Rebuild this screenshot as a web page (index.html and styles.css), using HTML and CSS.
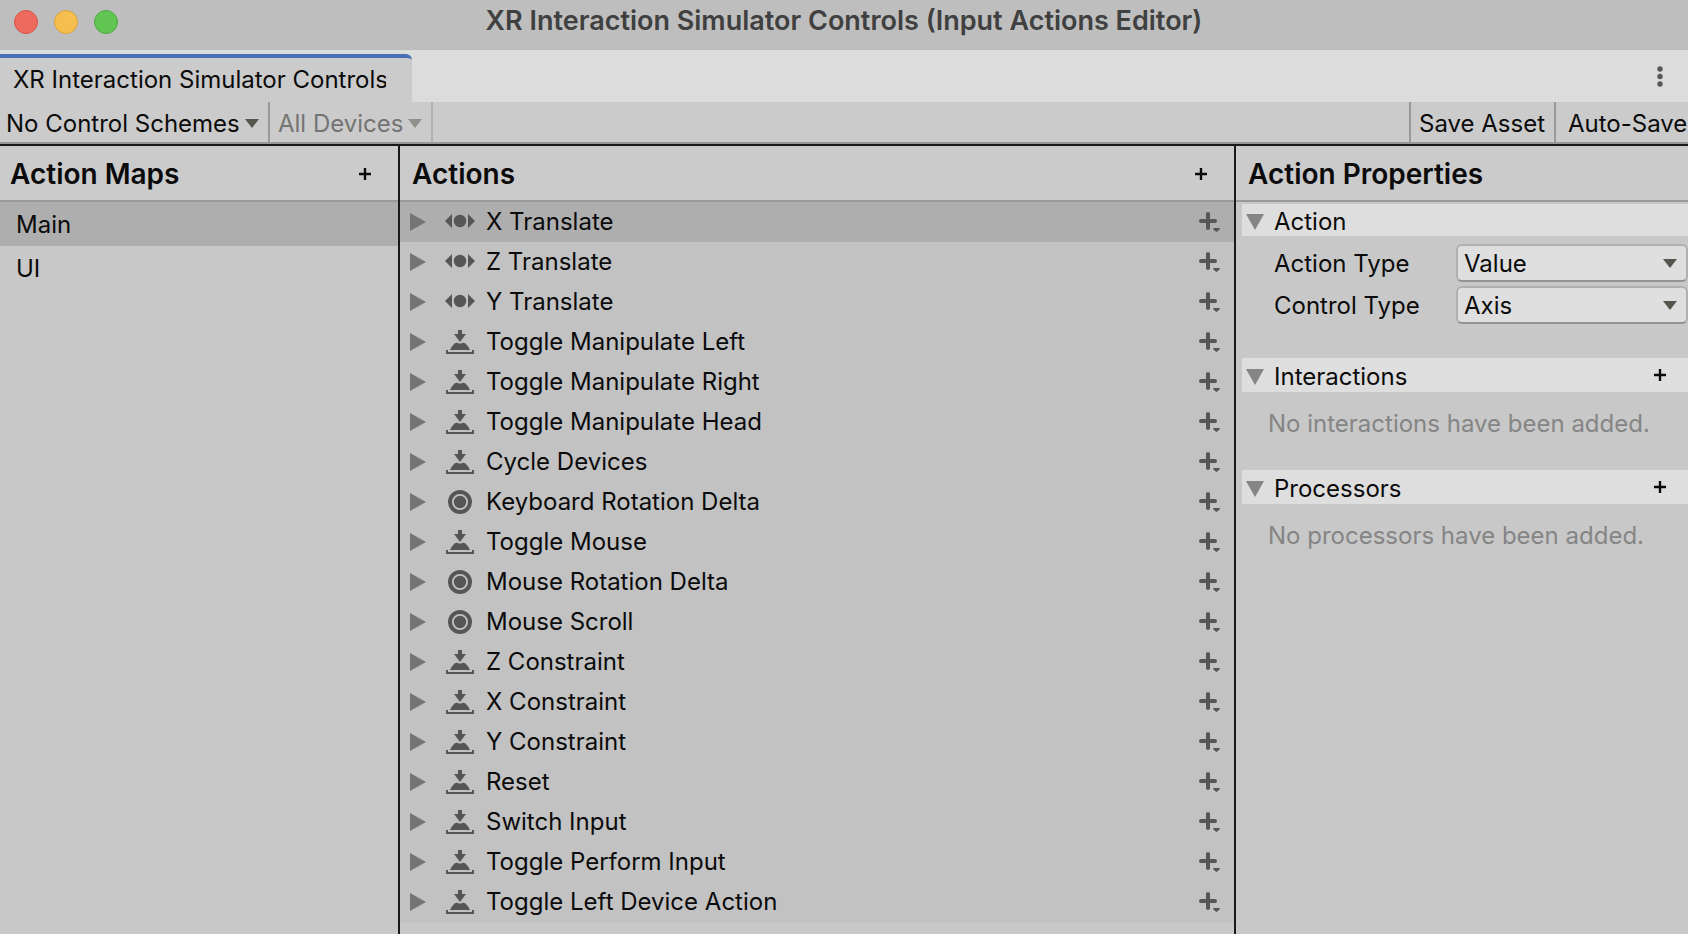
FILE: index.html
```
<!DOCTYPE html>
<html lang="en">
<head>
<meta charset="utf-8">
<title>XR Interaction Simulator Controls (Input Actions Editor)</title>
<link rel="stylesheet" href="styles.css">
</head>
<body>
<svg class="defs" aria-hidden="true">
  <symbol id="axis" viewBox="0 0 30 24"><path d="M0 11L7 4V18ZM30 11L23 4V18Z"/><circle cx="15" cy="11" r="6.200"/></symbol>
  <symbol id="press" viewBox="0 0 30 24"><path d="M13 0H17V4H21L15 12L9 4H13ZM5 20Q6 17 9.500 13.500Q10.500 12.500 12.500 12.700Q15 14.500 17.500 12.700Q19.500 12.500 20.500 13.500Q24 17 25 20ZM1 20H3V22H27V20H29V24H1Z"/></symbol>
  <symbol id="stick" viewBox="0 0 30 24"><circle cx="15" cy="12" r="10" fill="none" stroke="#565656" stroke-width="4"/><circle cx="15" cy="12" r="6.200"/></symbol>
  <symbol id="fold" viewBox="0 0 16 18"><path d="M0 0L16 9L0 18Z"/></symbol>
  <symbol id="open" viewBox="0 0 18 16"><path d="M0 0H18L9 16Z"/></symbol>
  <symbol id="caret" viewBox="0 0 14 9"><path d="M0 0H14L7 9Z"/></symbol>
  <symbol id="plus" viewBox="0 0 12 12"><path d="M0 6H12M6 0V12" fill="none" stroke="#0b0b0b" stroke-width="2.4"/></symbol>
  <symbol id="add" viewBox="0 0 22 22"><path d="M2 10H16M9 3V17" fill="none" stroke="#565656" stroke-width="4" stroke-linecap="round"/><path d="M14 17H21Q21 19 17.500 21Q14 19 14 17Z"/></symbol>
</svg>
<div class="window">
  <header class="titlebar">
    <div class="lights"><button class="light red" aria-label="Close"></button><button class="light yellow" aria-label="Minimize"></button><button class="light green" aria-label="Zoom"></button></div>
    <h1 class="title">XR Interaction Simulator Controls (Input Actions Editor)</h1>
  </header>
  <div class="tabbar">
    <button class="tab"><span class="tab-label">XR Interaction Simulator Controls</span></button>
    <button class="more" aria-label="More options"><svg width="6" height="22" viewBox="0 0 6 22"><circle cx="3" cy="3" r="2.700"/><circle cx="3" cy="10.500" r="2.700"/><circle cx="3" cy="18" r="2.700"/></svg></button>
  </div>
  <div class="toolbar">
    <button class="tool schemes">No Control Schemes<svg class="caret"><use href="#caret"/></svg></button>
    <button class="tool devices" disabled>All Devices<svg class="caret"><use href="#caret"/></svg></button>
    <button class="tool save">Save Asset</button>
    <button class="tool auto">Auto-Save</button>
  </div>
  <main class="panels">
    <section class="panel maps">
      <div class="head"><h2>Action Maps</h2><button class="plus" aria-label="Add action map"><svg><use href="#plus"/></svg></button></div>
      <button class="map selected">Main</button>
      <button class="map">UI</button>
    </section>
    <section class="panel actions">
      <div class="head"><h2>Actions</h2><button class="plus" aria-label="Add action"><svg><use href="#plus"/></svg></button></div>
      <ul class="list" id="list"></ul>
    </section>
    <section class="panel props">
      <div class="head"><h2>Action Properties</h2></div>
      <div class="group">
        <button class="section"><svg class="open"><use href="#open"/></svg>Action</button>
        <div class="fields">
          <div class="field"><label for="atype">Action Type</label><div class="pick"><select id="atype"><option>Value</option></select><svg class="caret"><use href="#caret"/></svg></div></div>
          <div class="field"><label for="ctype">Control Type</label><div class="pick"><select id="ctype"><option>Axis</option></select><svg class="caret"><use href="#caret"/></svg></div></div>
        </div>
        <div class="bar"><button class="section"><svg class="open"><use href="#open"/></svg>Interactions</button><button class="plus" aria-label="Add interaction"><svg><use href="#plus"/></svg></button></div>
        <p class="empty">No interactions have been added.</p>
        <div class="bar"><button class="section"><svg class="open"><use href="#open"/></svg>Processors</button><button class="plus" aria-label="Add processor"><svg><use href="#plus"/></svg></button></div>
        <p class="empty">No processors have been added.</p>
      </div>
    </section>
  </main>
</div>
<script src="actions.js"></script>
</body>
</html>
```
FILE: styles.css
```
* { box-sizing: border-box; }
body { margin: 0; background: #c8c8c8; color: #0b0b0b; font: 24px/30px Inter, "Liberation Sans", sans-serif; }
button, select { margin: 0; padding: 0; border: 0; background: none; color: inherit; font: inherit; text-align: left; }
h1, h2, p, ul { margin: 0; padding: 0; }
svg { display: block; flex: none; fill: #565656; }
.defs { position: absolute; width: 0; height: 0; }
.window { display: flex; flex-direction: column; min-height: 100vh; overflow: hidden; }
.titlebar { display: grid; grid-template-columns: 1fr auto 1fr; align-items: start; height: 50px; padding: 0 14px; background: #bebebe; }
.lights { display: flex; gap: 16px; padding-top: 10px; }
.light { width: 24px; height: 24px; border: 1px solid; border-radius: 50%; }
.red { background: #ed6a5e; border-color: #d6544a; }
.yellow { background: #f5bf4f; border-color: #dba23c; }
.green { background: #61c554; border-color: #4fa941; }
.title { padding-top: 6px; color: #404040; font-size: 27px; font-weight: 600; line-height: 30px; white-space: nowrap; }
.tabbar { display: flex; justify-content: space-between; height: 52px; padding-top: 4px; background: #dcdcdc; }
.tab { width: 412px; padding: 0 26px 0 13px; border-top: 4px solid #4771b0; border-radius: 0 6px 0 0; background: #cbcbcb; }
.tab-label { display: block; overflow: hidden; white-space: nowrap; }
.more { display: flex; align-items: center; justify-content: center; width: 56px; padding-bottom: 2px; }
.toolbar { display: flex; height: 42px; border-bottom: 2px solid #999; background: #cbcbcb; white-space: nowrap; }
.tool { display: flex; align-items: center; gap: 5px; flex: none; padding-top: 3px; }
.caret { width: 14px; height: 9px; fill: #56564e; }
.schemes { width: 270px; padding-left: 6px; border-right: 2px solid #999; }
.devices { width: 163px; padding-left: 8px; border-right: 2px solid #b0b0b0; color: #747474; }
.devices .caret { fill: #90908b; }
.save { width: 147px; margin-left: auto; padding-left: 8px; border: solid #999; border-width: 0 2px; }
.auto { width: 132px; padding-left: 12px; }
.panels { display: grid; grid-template-columns: 400fr 836fr 452fr; flex: 1; border-top: 2px solid #191919; }
.panel { min-width: 0; }
.maps, .actions { border-right: 2px solid #191919; }
.head { display: flex; align-items: center; justify-content: space-between; height: 56px; padding: 2px 21px 0 10px; border-bottom: 2px solid #999; background: #cbcbcb; }
.actions .head, .props .head { padding-left: 12px; }
h2 { font-size: 28px; font-weight: 600; line-height: 34px; }
.plus { display: grid; place-items: center; width: 24px; height: 24px; }
.plus svg { width: 12px; height: 12px; }
.map { display: block; width: 100%; height: 44px; padding: 2px 0 0 16px; }
.selected { background: #aeaeae; }
.list { list-style: none; background: #c2c2c2; }
.row { display: flex; align-items: center; height: 40px; padding: 0 13px 0 10px; }
.fold { display: flex; align-items: center; flex: 1; }
.fold-arrow { width: 16px; height: 18px; margin-right: 19px; fill: #747474; }
.kind { width: 30px; height: 24px; margin-right: 11px; }
.add svg { width: 22px; height: 22px; }
.group { padding: 2px 0 0 6px; }
.section { display: flex; align-items: center; gap: 10px; width: 100%; height: 32px; padding: 3px 0 0 4px; background: #dedede; }
.open { width: 18px; height: 16px; fill: #858585; }
.fields { display: grid; gap: 4px; padding: 8px 0 34px 32px; }
.field { display: grid; grid-template-columns: 182px 1fr; align-items: center; }
.field label { padding-top: 1px; }
.pick { display: grid; align-items: center; }
.pick > * { grid-area: 1 / 1; }
.pick .caret { justify-self: end; margin-right: 11px; pointer-events: none; }
select { appearance: none; width: 100%; height: 38px; padding: 1px 30px 0 6px; border: 2px solid #b0b0b0; border-bottom-color: #939393; border-radius: 6px; background: #dfdfdf; }
.bar { display: flex; align-items: center; height: 34px; padding-right: 17px; background: #dedede; }
.empty { padding: 17px 0 31px 26px; color: #858585; white-space: nowrap; }
```
FILE: actions.js
```
const actions = [
  ["axis", "X Translate"], ["axis", "Z Translate"], ["axis", "Y Translate"],
  ["press", "Toggle Manipulate Left"], ["press", "Toggle Manipulate Right"], ["press", "Toggle Manipulate Head"],
  ["press", "Cycle Devices"], ["stick", "Keyboard Rotation Delta"], ["press", "Toggle Mouse"],
  ["stick", "Mouse Rotation Delta"], ["stick", "Mouse Scroll"],
  ["press", "Z Constraint"], ["press", "X Constraint"], ["press", "Y Constraint"],
  ["press", "Reset"], ["press", "Switch Input"], ["press", "Toggle Perform Input"], ["press", "Toggle Left Device Action"]
];
document.getElementById("list").innerHTML = actions.map(([kind, name], i) => `
  <li class="row${i === 0 ? " selected" : ""}">
    <button class="fold"><svg class="fold-arrow"><use href="#fold"/></svg><svg class="kind"><use href="#${kind}"/></svg>${name}</button>
    <button class="add" aria-label="Add binding to ${name}"><svg><use href="#add"/></svg></button>
  </li>`).join("");
```
